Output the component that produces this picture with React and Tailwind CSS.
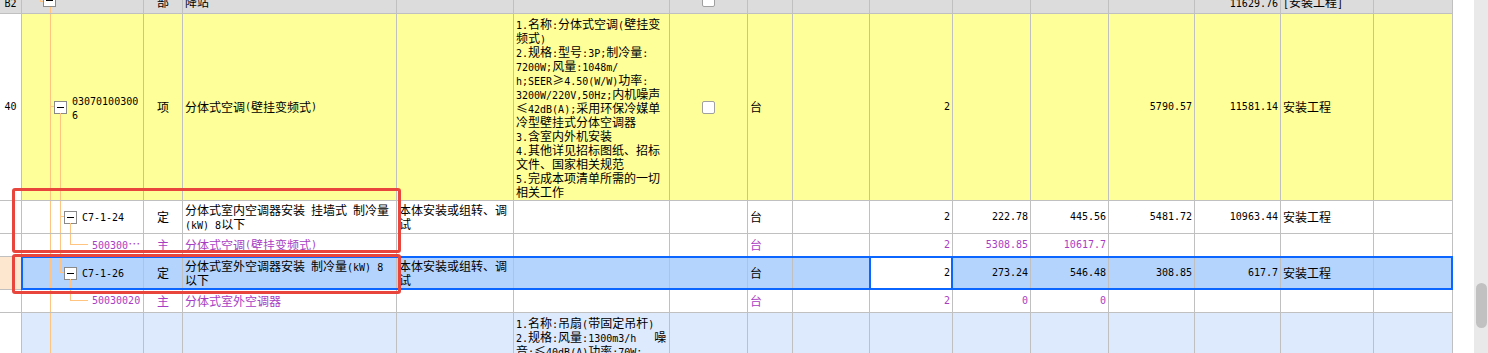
import React from "react";

const GRID =
  "grid shrink-0 grid-cols-[22px_122px_39px_214px_117px_156px_78px_45px_77px_83px_78px_78px_86px_86px_93px_79px]";
const OR = "absolute bg-[#ffc47f]";

function Txt({ s }) {
  const parts = s.match(/[\x20-\x7e]+|[^\x20-\x7e]+/g) || [];
  return parts.map((p, i) =>
    /^[\x20-\x7e]/.test(p) ? (
      <span key={i} className="font-['DejaVu_Sans_Mono',monospace] text-[10px]">
        {p}
      </span>
    ) : (
      <span key={i}>{p}</span>
    )
  );
}

function Lines({ lines }) {
  return (
    <div>
      {lines.map((l, i) => (
        <div key={i} className="h-[14px] whitespace-pre">
          <Txt s={l} />
        </div>
      ))}
    </div>
  );
}

function C({ a = "l", cls = "", children }) {
  const al =
    a === "r"
      ? "justify-end pr-[2px]"
      : a === "c"
      ? "justify-center"
      : a === "n"
      ? ""
      : "pl-[2px]";
  return (
    <div
      className={`relative overflow-hidden flex items-center border-r border-b border-[#c0c0c0] ${al} ${cls}`}
    >
      {children}
    </div>
  );
}

function Box() {
  return (
    <div className="w-[13px] h-[13px] shrink-0 border border-[#8a8a8a] bg-white flex items-center justify-center">
      <div className="w-[7px] h-px bg-black" />
    </div>
  );
}

function Check() {
  return <div className="w-[13px] h-[13px] rounded-[2px] border border-[#a0a0a0] bg-white" />;
}

const E = () => <C />;

function HeaderRow() {
  const clip = "-mt-[5px] self-start h-[14px]";
  return (
    <div className={`${GRID} h-[14px] bg-[#dcdcdc]`}>
      <C a="c">
        <div className={clip}>
          <Txt s="B2" />
        </div>
      </C>
      <C a="n">
        <div className={`${OR} left-[18px] top-0 w-px h-[2px]`} />
        <div className={`${OR} left-[18px] top-[1px] w-[3px] h-px`} />
        <div className="absolute left-[21px] top-[-6px]">
          <Box />
        </div>
        <div className={`${OR} left-[28px] top-[7px] bottom-0 w-px`} />
      </C>
      <C a="c">
        <div className={clip}>部</div>
      </C>
      <C>
        <div className={clip}>降站</div>
      </C>
      <E />
      <E />
      <C a="n">
        <div className="absolute left-[32px] top-[-6px]">
          <Check />
        </div>
      </C>
      <E />
      <E />
      <E />
      <E />
      <E />
      <E />
      <C a="r">
        <div className={clip}>
          <Txt s="11629.76" />
        </div>
      </C>
      <C>
        <div className={clip}>
          <Txt s="[安装工程]" />
        </div>
      </C>
      <E />
    </div>
  );
}

function Row40() {
  return (
    <div className={`${GRID} h-[187px] bg-[#ffff99]`}>
      <C a="c" cls="bg-white">
        <Txt s="40" />
      </C>
      <C a="n" cls="pl-[32px]">
        <div className={`${OR} left-[28px] top-0 bottom-0 w-px`} />
        <div className={`${OR} left-[28px] top-[92px] w-[4px] h-px`} />
        <div className={`${OR} left-[38px] top-[99px] bottom-0 w-px`} />
        <Box />
        <div className="ml-[5px]">
          <Lines lines={["03070100300", "6"]} />
        </div>
      </C>
      <C a="c">项</C>
      <C>
        <Txt s="分体式空调(壁挂变频式)" />
      </C>
      <E />
      <C cls="items-start pt-[3px]">
        <Lines
          lines={[
            "1.名称:分体式空调(壁挂变",
            "频式)",
            "2.规格:型号:3P;制冷量:",
            "7200W;风量:1048m/",
            "h;SEER≥4.50(W/W)功率:",
            "3200W/220V,50Hz;内机噪声",
            "≤42dB(A);采用环保冷媒单",
            "冷型壁挂式分体空调器",
            "3.含室内外机安装",
            "4.其他详见招标图纸、招标",
            "文件、国家相关规范",
            "5.完成本项清单所需的一切",
            "相关工作",
          ]}
        />
      </C>
      <C a="c">
        <Check />
      </C>
      <C>台</C>
      <E />
      <C a="r">
        <Txt s="2" />
      </C>
      <E />
      <E />
      <C a="r">
        <Txt s="5790.57" />
      </C>
      <C a="r">
        <Txt s="11581.14" />
      </C>
      <C>安装工程</C>
      <E />
    </div>
  );
}

function RowC724() {
  return (
    <div className={`${GRID} h-[33px] bg-white`}>
      <E />
      <C a="n" cls="pl-[42px]">
        <div className={`${OR} left-[28px] top-0 bottom-0 w-px`} />
        <div className={`${OR} left-[38px] top-0 bottom-0 w-px`} />
        <div className={`${OR} left-[38px] top-[15px] w-[4px] h-px`} />
        <div className={`${OR} left-[48px] top-[22px] bottom-0 w-px`} />
        <Box />
        <div className="ml-[5px]">
          <Txt s="C7-1-24" />
        </div>
      </C>
      <C a="c">定</C>
      <C>
        <Lines lines={["分体式室内空调器安装 挂墙式 制冷量", "(kW) 8以下"]} />
      </C>
      <C>
        <Lines lines={["本体安装或组转、调", "试"]} />
      </C>
      <E />
      <E />
      <C>台</C>
      <E />
      <C a="r">
        <Txt s="2" />
      </C>
      <C a="r">
        <Txt s="222.78" />
      </C>
      <C a="r">
        <Txt s="445.56" />
      </C>
      <C a="r">
        <Txt s="5481.72" />
      </C>
      <C a="r">
        <Txt s="10963.44" />
      </C>
      <C>安装工程</C>
      <E />
    </div>
  );
}

function RowMain1() {
  return (
    <div className={`${GRID} h-[23px] bg-white text-[#a93dc2]`}>
      <E />
      <C a="n" cls="pl-[70px]">
        <div className={`${OR} left-[28px] top-0 bottom-0 w-px`} />
        <div className={`${OR} left-[38px] top-0 bottom-0 w-px`} />
        <div className={`${OR} left-[48px] top-0 h-[11px] w-px`} />
        <div className={`${OR} left-[48px] top-[10px] w-[18px] h-px`} />
        <div className="whitespace-nowrap">
          <Txt s="500300…" />
        </div>
      </C>
      <C a="c">主</C>
      <C>
        <Txt s="分体式空调(壁挂变频式)" />
      </C>
      <E />
      <E />
      <E />
      <C>台</C>
      <E />
      <C a="r">
        <Txt s="2" />
      </C>
      <C a="r">
        <Txt s="5308.85" />
      </C>
      <C a="r">
        <Txt s="10617.7" />
      </C>
      <E />
      <E />
      <E />
      <E />
    </div>
  );
}

function RowC726() {
  return (
    <div className="relative shrink-0">
      <div className={`${GRID} h-[33px] bg-[#b4d4fd]`}>
        <C cls="bg-[#fde8cf]" />
        <C a="n" cls="pl-[42px]">
          <div className={`${OR} left-[28px] top-0 bottom-0 w-px`} />
          <div className={`${OR} left-[38px] top-0 h-[16px] w-px`} />
          <div className={`${OR} left-[38px] top-[15px] w-[4px] h-px`} />
          <div className={`${OR} left-[48px] top-[22px] bottom-0 w-px`} />
          <Box />
          <div className="ml-[5px]">
            <Txt s="C7-1-26" />
          </div>
        </C>
        <C a="c">定</C>
        <C>
          <Lines lines={["分体式室外空调器安装 制冷量(kW) 8", "以下"]} />
        </C>
        <C>
          <Lines lines={["本体安装或组转、调", "试"]} />
        </C>
        <E />
        <E />
        <C>台</C>
        <E />
        <div className="relative flex items-center justify-end pr-[2px] bg-white border-r border-b border-[#c0c0c0]">
          <Txt s="2" />
          <div className="absolute left-[-1px] right-[-1px] top-[-1px] bottom-[-1px] border-2 border-[#0a66ff] pointer-events-none" />
        </div>
        <C a="r">
          <Txt s="273.24" />
        </C>
        <C a="r">
          <Txt s="546.48" />
        </C>
        <C a="r">
          <Txt s="308.85" />
        </C>
        <C a="r">
          <Txt s="617.7" />
        </C>
        <C>安装工程</C>
        <E />
      </div>
      <div className="absolute left-[21px] -top-px w-[1432px] h-[34px] border-2 border-[#0a66ff] pointer-events-none" />
    </div>
  );
}

function RowMain2() {
  return (
    <div className={`${GRID} h-[23px] bg-white text-[#a93dc2]`}>
      <E />
      <C a="n" cls="pl-[70px]">
        <div className={`${OR} left-[28px] top-0 bottom-0 w-px`} />
        <div className={`${OR} left-[48px] top-0 h-[11px] w-px`} />
        <div className={`${OR} left-[48px] top-[10px] w-[18px] h-px`} />
        <Txt s="50030020" />
      </C>
      <C a="c">主</C>
      <C>分体式室外空调器</C>
      <E />
      <E />
      <E />
      <C>台</C>
      <E />
      <C a="r">
        <Txt s="2" />
      </C>
      <C a="r">
        <Txt s="0" />
      </C>
      <C a="r">
        <Txt s="0" />
      </C>
      <E />
      <E />
      <E />
      <E />
    </div>
  );
}

function RowLast() {
  return (
    <div className={`${GRID} h-[60px] bg-[#dde9fc]`}>
      <C cls="bg-white" />
      <C a="n">
        <div className={`${OR} left-[28px] top-0 bottom-0 w-px`} />
      </C>
      <E />
      <E />
      <E />
      <C cls="items-start pt-[3px]">
        <Lines
          lines={["1.名称:吊扇(带固定吊杆)", "2.规格:风量:1300m3/h   噪", "音:≤40dB(A)功率:70W;"]}
        />
      </C>
      <E />
      <E />
      <E />
      <E />
      <E />
      <E />
      <E />
      <E />
      <E />
      <E />
    </div>
  );
}

export default function App() {
  return (
    <div
      lang="zh-CN"
      className="relative w-[1488px] h-[353px] overflow-hidden bg-white flex items-start font-['Noto_Sans_CJK_SC',sans-serif] text-[12px] leading-[14px] text-black"
    >
      <div className="w-[1453px] shrink-0 flex flex-col">
        <HeaderRow />
        <Row40 />
        <RowC724 />
        <RowMain1 />
        <RowC726 />
        <RowMain2 />
        <RowLast />
      </div>
      <div className="w-[21px] h-[353px] shrink-0 bg-white" />
      <div className="w-[14px] h-[353px] shrink-0 bg-[#e9e9e9] pt-[283px] flex justify-center">
        <div className="w-[11px] h-[45px] rounded-full bg-[#c1c1c1]" />
      </div>

      <div className="absolute left-[12px] top-[188px] w-[389px] h-[65px] border-[3px] border-[#e8453c] rounded-[3px] pointer-events-none" />
      <div className="absolute left-[12px] top-[254px] w-[389px] h-[40px] border-[3px] border-[#e8453c] rounded-[3px] pointer-events-none" />
    </div>
  );
}
